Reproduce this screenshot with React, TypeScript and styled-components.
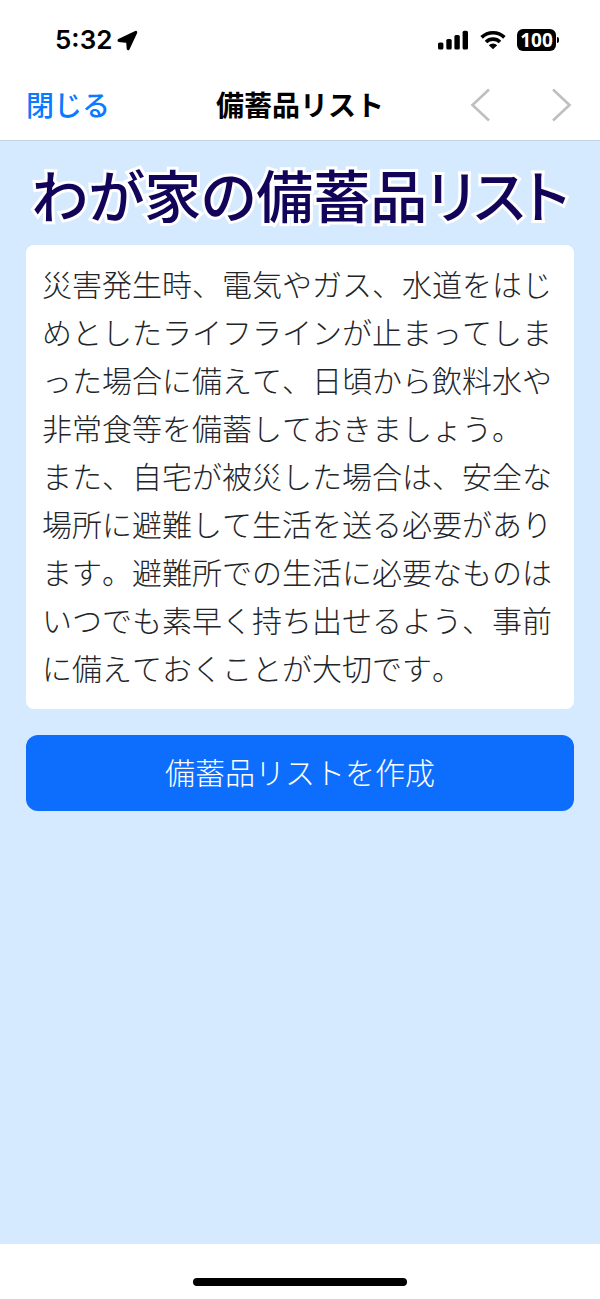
import React from "react";
import styled, { createGlobalStyle } from "styled-components";

const GlobalStyle = createGlobalStyle`
  *, *::before, *::after { box-sizing: border-box; }
  body {
    margin: 0;
    background: #ffffff;
    font-family: "Noto Sans CJK JP", "Noto Sans", sans-serif;
    color: #212529;
  }
  h1, h2, p { margin: 0; }
  button { font-family: inherit; border: 0; padding: 0; background: none; cursor: pointer; }
`;

const Screen = styled.div`
  display: flex;
  flex-direction: column;
  min-height: 100vh;
`;

const StatusBar = styled.div`
  display: flex;
  align-items: center;
  justify-content: space-between;
  height: 80px;
  padding: 0 41px 0 55px;
  color: #000000;
`;

const StatusGroup = styled.div<{ $gap: number }>`
  display: flex;
  align-items: center;
  gap: ${({ $gap }) => $gap}px;
`;

const Clock = styled.time`
  font: 600 26px/32px Inter, sans-serif;
`;

const Battery = styled.div`
  display: flex;
  align-items: center;
  gap: 1px;
`;

const BatteryLevel = styled.span`
  width: 39px;
  height: 22px;
  border-radius: 6px;
  background: #000000;
  color: #ffffff;
  font: 700 19px/22px "Noto Sans", sans-serif;
  text-align: center;
`;

const BatteryCap = styled.span`
  width: 2px;
  height: 6px;
  border-radius: 0 2px 2px 0;
  background: #000000;
`;

const NavBar = styled.header`
  display: grid;
  grid-template-columns: 1fr auto 1fr;
  align-items: center;
  height: 61px;
  padding: 0 26px 12px;
  border-bottom: 1px solid #c3d2df;
`;

const CloseButton = styled.button`
  justify-self: start;
  color: #0a7aff;
  font-size: 28px;
  line-height: 40px;
  font-weight: 500;
`;

const NavTitle = styled.h2`
  color: #000000;
  font-size: 28px;
  line-height: 40px;
  font-weight: 700;
`;

const NavArrows = styled.div`
  display: flex;
  justify-self: end;
  gap: 60px;
  padding: 2px 2px 0 0;
`;

const ArrowButton = styled.button`
  display: flex;
  color: #bfbfbf;
`;

const Content = styled.main`
  flex: 1;
  padding: 12px 26px;
  background: #d5eafe;
`;

const PageTitle = styled.h1`
  margin: 0 -16px;
  color: #120458;
  font-size: 57px;
  line-height: 80px;
  font-weight: 500;
  font-feature-settings: "palt";
  text-align: center;
  white-space: nowrap;
  -webkit-text-stroke: 6px #ffffff;
  paint-order: stroke fill;
`;

const Card = styled.section`
  margin: 12px 0 26px;
  padding: 14px 16px 18px;
  border-radius: 8px;
  background: #ffffff;
  font-size: 30px;
  line-height: 48px;
  font-weight: 300;
  line-break: anywhere;
  font-kerning: none;
  text-spacing-trim: space-all;
`;

const PrimaryButton = styled.button`
  display: block;
  width: 100%;
  height: 76px;
  padding-bottom: 4px;
  border-radius: 12px;
  background: #0d6efd;
  color: #ffffff;
  font-size: 30px;
  line-height: 48px;
  font-weight: 300;
`;

const HomeArea = styled.footer`
  display: flex;
  justify-content: center;
  height: 55px;
  padding-top: 34px;
`;

const HomeIndicator = styled.div`
  width: 214px;
  height: 8px;
  border-radius: 4px;
  background: #000000;
`;

const LocationIcon = () => (
  <svg width="21" height="21" viewBox="0 0 21 21" aria-hidden="true">
    <path
      d="M18.8 2.4 11.2 18.6 10.6 11.4 2 10.4Z"
      fill="currentColor"
      stroke="currentColor"
      strokeWidth="3"
      strokeLinejoin="round"
    />
  </svg>
);

const SignalIcon = () => (
  <svg width="31" height="20" viewBox="0 0 31 20" fill="currentColor" aria-hidden="true">
    <rect x="0" y="12.5" width="5.4" height="7" rx="1.6" />
    <rect x="8.3" y="9" width="5.4" height="10.5" rx="1.6" />
    <rect x="16.4" y="5" width="5.4" height="14.5" rx="1.6" />
    <rect x="24.6" y="0.8" width="5.4" height="18.7" rx="1.6" />
  </svg>
);

const WifiIcon = () => (
  <svg width="26" height="20" viewBox="0 0 26 20" aria-hidden="true">
    <g fill="none" stroke="currentColor" strokeWidth="3.6">
      <path d="M1.6 7.4a16.2 16.2 0 0 1 22.8 0" />
      <path d="M6 12a10 10 0 0 1 14 0" />
    </g>
    <path d="M13 19.2 8.8 15.2a6 6 0 0 1 8.4 0Z" fill="currentColor" />
  </svg>
);

const Chevron = ({ points }: { points: string }) => (
  <svg width="21" height="34" viewBox="0 0 21 34" aria-hidden="true">
    <polyline points={points} fill="none" stroke="currentColor" strokeWidth="2.6" />
  </svg>
);

export default function App() {
  return (
    <>
      <GlobalStyle />
      <Screen>
        <StatusBar>
          <StatusGroup $gap={5}>
            <Clock>5:32</Clock>
            <LocationIcon />
          </StatusGroup>
          <StatusGroup $gap={11}>
            <SignalIcon />
            <WifiIcon />
            <Battery>
              <BatteryLevel>100</BatteryLevel>
              <BatteryCap />
            </Battery>
          </StatusGroup>
        </StatusBar>
        <NavBar>
          <CloseButton type="button">閉じる</CloseButton>
          <NavTitle>備蓄品リスト</NavTitle>
          <NavArrows>
            <ArrowButton type="button" aria-label="前へ">
              <Chevron points="19,1.5 2.5,17 19,32.5" />
            </ArrowButton>
            <ArrowButton type="button" aria-label="次へ">
              <Chevron points="2,1.5 18.5,17 2,32.5" />
            </ArrowButton>
          </NavArrows>
        </NavBar>
        <Content>
          <PageTitle>わが家の備蓄品リスト</PageTitle>
          <Card>
            <p>
              災害発生時、電気やガス、水道をはじめとしたライフラインが止まってしまった場合に備えて、日頃から飲料水や非常食等を備蓄しておきましょう。
            </p>
            <p>
              また、自宅が被災した場合は、安全な場所に避難して生活を送る必要があります。避難所での生活に必要なものはいつでも素早く持ち出せるよう、事前に備えておくことが大切です。
            </p>
          </Card>
          <PrimaryButton type="button">備蓄品リストを作成</PrimaryButton>
        </Content>
        <HomeArea>
          <HomeIndicator />
        </HomeArea>
      </Screen>
    </>
  );
}
